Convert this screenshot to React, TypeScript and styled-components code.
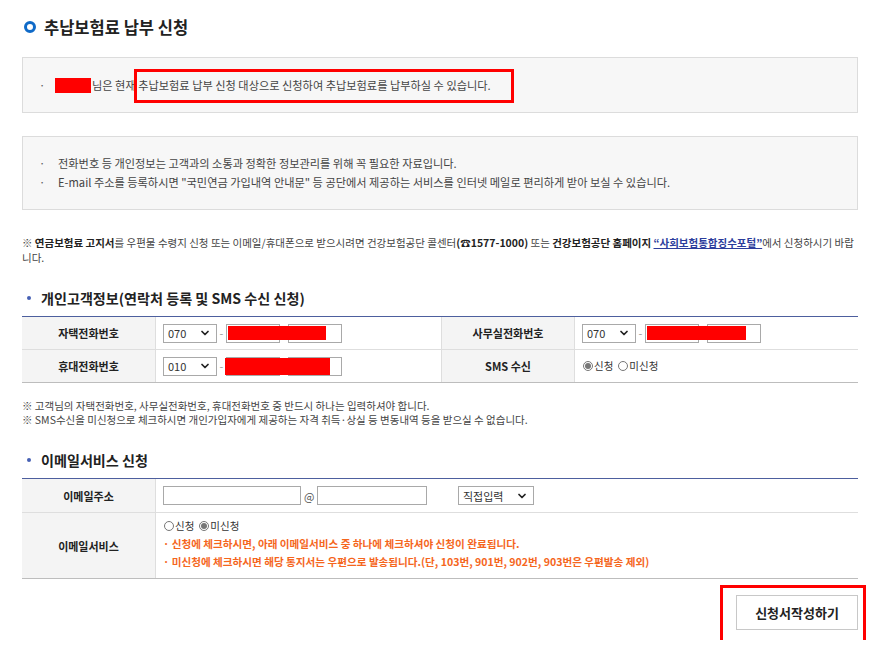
import { createGlobalStyle, styled } from 'styled-components'
import { ChevronDown } from 'lucide-react'

const GlobalStyle = createGlobalStyle`
  html, body {
    margin: 0;
    padding: 0;
    background: #fff;
  }
  body {
    font-family: 'Noto Sans CJK KR', 'Noto Sans', sans-serif;
    color: #333;
  }
`

function Select({ value, width }: { value: string; width: number }): JSX.Element {
  return (
    <SelectBox $width={width}>
      <span>{value}</span>
      <ChevronDown size={12} strokeWidth={3.5} color="#222" />
    </SelectBox>
  )
}

function PhoneInput({
  code,
  redactLeft,
  redactWidth,
  redactTall,
}: {
  code: string
  redactLeft: number
  redactWidth: number
  redactTall?: boolean
}): JSX.Element {
  return (
    <PhoneGroup>
      <Select value={code} width={54} />
      <Dash>-</Dash>
      <TextInput $width={54} />
      <TextInput $width={54} />
      <Redact $tall={redactTall} style={{ left: redactLeft, width: redactWidth }} />
    </PhoneGroup>
  )
}

export default function App(): JSX.Element {
  return (
    <>
      <GlobalStyle />
      <Page>
        <Title>
          <TitleRing />
          추납보험료 납부 신청
        </Title>

        <NoticeBox>
          <Bullet>·</Bullet>
          <NameMask />
          님은 현재 추납보험료 납부 신청 대상으로 신청하여 추납보험료를 납부하실 수 있습니다.
          <Highlight />
        </NoticeBox>

        <InfoBox>
          <InfoLine>
            <Bullet>·</Bullet>전화번호 등 개인정보는 고객과의 소통과 정확한 정보관리를 위해 꼭 필요한 자료입니다.
          </InfoLine>
          <InfoLine>
            <Bullet>·</Bullet>E-mail 주소를 등록하시면 "국민연금 가입내역 안내문" 등 공단에서 제공하는 서비스를 인터넷 메일로 편리하게 받아 보실 수 있습니다.
          </InfoLine>
        </InfoBox>

        <Remark>
          ※ <b>연금보험료 고지서</b>를 우편물 수령지 신청 또는 이메일/휴대폰으로 받으시려면 건강보험공단 콜센터
          <b>(☎1577-1000)</b> 또는 <b>건강보험공단 홈페이지</b> <Link>“사회보험통합징수포털”</Link>에서 신청하시기 바랍니다.
        </Remark>

        <SectionTitle>개인고객정보(연락처 등록 및 SMS 수신 신청)</SectionTitle>
        <FormTable>
          <Row $cols="134px 285px 134px 1fr">
            <HeadCell>자택전화번호</HeadCell>
            <ValueCell>
              <PhoneInput code="070" redactLeft={65} redactWidth={98} />
            </ValueCell>
            <HeadCell $bordered>사무실전화번호</HeadCell>
            <ValueCell>
              <PhoneInput code="070" redactLeft={65} redactWidth={99} />
            </ValueCell>
          </Row>
          <Row $cols="134px 285px 134px 1fr" $last>
            <HeadCell>휴대전화번호</HeadCell>
            <ValueCell>
              <PhoneInput code="010" redactLeft={62} redactWidth={105} redactTall />
            </ValueCell>
            <HeadCell $bordered>SMS 수신</HeadCell>
            <ValueCell>
              <RadioGroup>
                <Radio name="sms" defaultChecked />신청
                <Radio name="sms" $spaced />미신청
              </RadioGroup>
            </ValueCell>
          </Row>
        </FormTable>

        <Notes>
          <p>※ 고객님의 자택전화번호, 사무실전화번호, 휴대전화번호 중 반드시 하나는 입력하셔야 합니다.</p>
          <p>※ SMS수신을 미신청으로 체크하시면 개인가입자에게 제공하는 자격 취득·상실 등 변동내역 등을 받으실 수 없습니다.</p>
        </Notes>

        <SectionTitle>이메일서비스 신청</SectionTitle>
        <FormTable>
          <Row $cols="134px 1fr">
            <HeadCell $tall>이메일주소</HeadCell>
            <ValueCell>
              <EmailGroup>
                <TextInput $width={138} />
                <At>@</At>
                <TextInput $width={110} />
                <Select value="직접입력" width={76} />
              </EmailGroup>
            </ValueCell>
          </Row>
          <Row $cols="134px 1fr" $last>
            <HeadCell>이메일서비스</HeadCell>
            <ValueCell $stack>
              <RadioGroup>
                <Radio name="mail" />신청
                <Radio name="mail" $spaced defaultChecked />미신청
              </RadioGroup>
              <Warn>· 신청에 체크하시면, 아래 이메일서비스 중 하나에 체크하셔야 신청이 완료됩니다.</Warn>
              <Warn>· 미신청에 체크하시면 해당 통지서는 우편으로 발송됩니다.(단, 103번, 901번, 902번, 903번은 우편발송 제외)</Warn>
            </ValueCell>
          </Row>
        </FormTable>

        <Actions>
          <SubmitWrap>
            <SubmitButton>신청서작성하기</SubmitButton>
          </SubmitWrap>
        </Actions>
      </Page>
    </>
  )
}

const Page = styled.div`
  width: 836px;
  margin-left: 22px;
  padding-top: 14px;
`

const Title = styled.h2`
  display: flex;
  align-items: center;
  gap: 8px;
  margin: 0 0 17px;
  font-size: 16.5px;
  font-weight: 700;
  color: #222;
  line-height: 26px;
`

const TitleRing = styled.span`
  width: 6px;
  height: 6px;
  border: 3px solid #0f6ac8;
  border-radius: 50%;
  margin-left: 2px;
`

const NoticeBox = styled.div`
  position: relative;
  display: flex;
  align-items: center;
  height: 54px;
  padding-left: 16px;
  background: #f7f7f7;
  border: 1px solid #dcdcdc;
  font-size: 11.2px;
  color: #444;
`

const Bullet = styled.span`
  display: inline-block;
  width: 16px;
  color: #555;
`

const NameMask = styled.span`
  display: inline-block;
  width: 36px;
  height: 15px;
  background: #ff0000;
  margin-right: 1px;
`

const Highlight = styled.span`
  position: absolute;
  left: 111px;
  top: 11px;
  width: 374px;
  height: 28px;
  border: 3px solid #ff0000;
`

const InfoBox = styled.div`
  margin-top: 23px;
  padding: 17px 0 17px 16px;
  background: #f7f7f7;
  border: 1px solid #dcdcdc;
  height: 38px;
`

const InfoLine = styled.div`
  font-size: 11.2px;
  line-height: 19px;
  color: #444;

  ${Bullet} {
    width: 19px;
  }
`

const Remark = styled.p`
  margin: 25px 0 0;
  font-size: 10.5px;
  line-height: 15px;
  color: #444;
  word-break: break-all;

  b {
    color: #222;
  }
`

const Link = styled.a`
  color: #2c3d9c;
  font-weight: 700;
  text-decoration: underline;
`

const SectionTitle = styled.h3`
  display: flex;
  align-items: center;
  margin: 22px 0 7px;
  font-size: 14.1px;
  font-weight: 700;
  color: #222;
  line-height: 22px;

  &::before {
    content: '';
    width: 4px;
    height: 4px;
    border-radius: 50%;
    background: #4660b4;
    margin: 0 10px 0 5px;
  }
`

const FormTable = styled.div`
  border-top: 1px solid #4d5f9e;
  border-bottom: 1px solid #bdbdbd;
`

const Row = styled.div<{ $cols: string; $last?: boolean }>`
  display: grid;
  grid-template-columns: ${(p) => p.$cols};
  border-bottom: ${(p) => (p.$last ? 'none' : '1px solid #dedede')};
`

const HeadCell = styled.div<{ $bordered?: boolean; $tall?: boolean }>`
  display: flex;
  align-items: center;
  justify-content: center;
  min-height: ${(p) => (p.$tall ? 33 : 32)}px;
  background: #f4f4f4;
  border-right: 1px solid #dedede;
  border-left: ${(p) => (p.$bordered ? '1px solid #dedede' : 'none')};
  font-size: 11px;
  font-weight: 700;
  color: #222;
`

const ValueCell = styled.div<{ $stack?: boolean }>`
  display: flex;
  flex-direction: ${(p) => (p.$stack ? 'column' : 'row')};
  justify-content: flex-start;
  align-items: ${(p) => (p.$stack ? 'flex-start' : 'center')};
  padding: ${(p) => (p.$stack ? '4px 0 7px 7px' : '0 7px')};
`

const PhoneGroup = styled.div`
  position: relative;
  display: flex;
  align-items: center;
`

const SelectBox = styled.div<{ $width: number }>`
  display: flex;
  align-items: center;
  justify-content: space-between;
  box-sizing: border-box;
  width: ${(p) => p.$width}px;
  height: 19px;
  padding: 0 5px 0 4px;
  border: 1px solid #a9a9a9;
  background: #fff;
  font-size: 11px;
  color: #333;
`

const Dash = styled.span`
  width: 9px;
  text-align: center;
  font-size: 11px;
  color: #999;
`

const TextInput = styled.input<{ $width: number }>`
  box-sizing: border-box;
  width: ${(p) => p.$width}px;
  height: 19px;
  border: 1px solid #a9a9a9;
  padding: 0 3px;
  margin: 0 8px 0 0;
  font-size: 11px;
`

const Redact = styled.span<{ $tall?: boolean }>`
  position: absolute;
  z-index: 1;
  top: ${(p) => (p.$tall ? 1 : 2)}px;
  height: ${(p) => (p.$tall ? 17 : 14)}px;
  background: #ff0000;
`

const RadioGroup = styled.label`
  display: flex;
  align-items: center;
  font-size: 10.5px;
  color: #333;
  line-height: 18px;
`

const Radio = styled.input.attrs({ type: 'radio' })<{ $spaced?: boolean }>`
  width: 10px;
  height: 10px;
  margin: 0 1px 0 ${(p) => (p.$spaced ? 5 : 1)}px;
  accent-color: #777;
`

const EmailGroup = styled.div`
  display: flex;
  align-items: center;

  ${TextInput}:first-child {
    margin-right: 3px;
  }

  ${SelectBox} {
    margin-left: 23px;
  }
`

const At = styled.span`
  width: 13px;
  font-size: 11px;
  color: #555;
`

const Notes = styled.div`
  margin-top: 16px;

  p {
    margin: 0;
    font-size: 10.5px;
    line-height: 14px;
    color: #444;
  }
`

const Warn = styled.div`
  font-size: 10.6px;
  line-height: 18px;
  font-weight: 700;
  color: #f5661d;
`

const Actions = styled.div`
  display: flex;
  justify-content: flex-end;
  margin-top: 6px;
`

const SubmitWrap = styled.div`
  position: relative;
  padding: 10px 0;

  &::after {
    content: '';
    position: absolute;
    left: -16px;
    right: -8px;
    top: 0;
    bottom: -3px;
    border: 3px solid #ff0000;
  }
`

const SubmitButton = styled.button`
  width: 122px;
  height: 35px;
  border: 1px solid #c8c8c8;
  background: #fff;
  font-family: inherit;
  font-size: 13px;
  font-weight: 700;
  color: #222;
`
